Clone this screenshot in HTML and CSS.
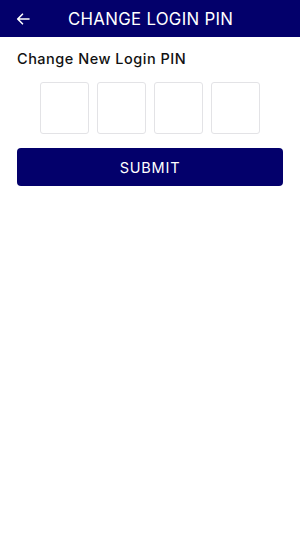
FILE: index.html
```html
<!DOCTYPE html>
<html>
<head>
<meta charset="utf-8">
<link rel="stylesheet" href="styles.css">
</head>
<body>
<header class="appbar">
  <span class="back">
    <svg width="14" height="12" viewBox="0 0 14 12"><path d="M13 6H2M6.5 1.2L1.7 6l4.8 4.8" fill="none" stroke="#fff" stroke-width="1.6" stroke-linecap="round" stroke-linejoin="round"/></svg>
  </span>
  <h1 class="title">CHANGE LOGIN PIN</h1>
</header>
<main class="content">
  <p class="label">Change New Login PIN</p>
  <div class="pins">
    <div class="pin"></div>
    <div class="pin"></div>
    <div class="pin"></div>
    <div class="pin"></div>
  </div>
  <button class="submit">SUBMIT</button>
</main>
</body>
</html>
```
FILE: styles.css
```css
html, body { margin: 0; padding: 0; background: #fff; }
body { font-family: "Open Sans", "Liberation Sans", sans-serif; width: 300px; }
.appbar {
  height: 37px;
  background: #03006b;
  display: flex;
  align-items: center;
  padding-left: 16px;
  box-sizing: border-box;
}
.back { display: flex; width: 14px; height: 12px; margin-right: 38px; }
.title {
  margin: 0;
  color: #fff;
  font-family: "Inter", "Liberation Sans", sans-serif;
  font-weight: 400;
  font-size: 16.8px;
  letter-spacing: 0.3px;
}
.content { padding: 0 17px; }
.label {
  margin: 13px 0 0;
  font-family: "Inter", "Liberation Sans", sans-serif;
  font-size: 14.5px;
  font-weight: 500;
  color: #111;
  line-height: 18px;
  letter-spacing: 0.5px;
}
.pins {
  display: flex;
  justify-content: center;
  gap: 8px;
  margin-top: 14px;
}
.pin {
  width: 47px;
  height: 50px;
  border: 1px solid #e3e3e6;
  border-radius: 3px;
}
.submit {
  display: block;
  width: 100%;
  height: 38px;
  margin-top: 14px;
  border: none;
  border-radius: 4px;
  background: #03006b;
  color: #fff;
  font-family: "Inter", "Liberation Sans", sans-serif;
  font-size: 14.5px;
  letter-spacing: 0.8px;
}
```
